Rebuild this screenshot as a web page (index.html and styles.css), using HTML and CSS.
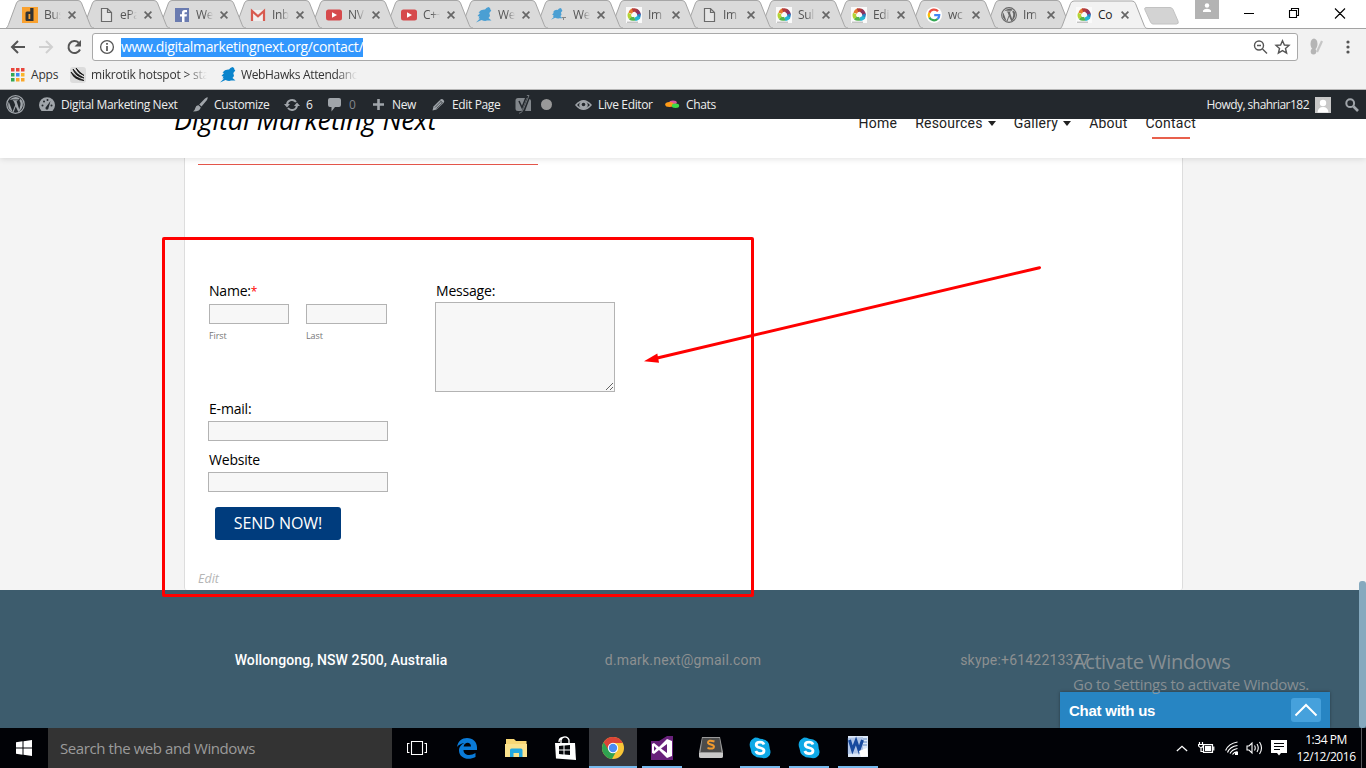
FILE: index.html
```html
<!DOCTYPE html>
<html lang="en">
<head>
<meta charset="utf-8">
<title>Contact - Digital Marketing Next</title>
<link rel="stylesheet" href="styles.css">
</head>
<body>
<svg class="defs" width="0" height="0">
  <symbol id="shape" viewBox="0 0 88 28"><path d="M0 28 C1.500 28 1.700 26 2.500 24.500 L10.500 3 Q11.500 .5 14 .5 H72 Q74.500 .5 75.500 3 L84 24.500 C84.800 26.500 85.500 28 88 28"/></symbol>
  <symbol id="x" viewBox="0 0 8 8"><path d="M.6.6 7.400 7.400M7.400.6.6 7.400" fill="none" stroke="#666" stroke-width="1.700"/></symbol>
  <symbol id="doc" viewBox="0 0 16 16"><path d="M1.500 1.500H7.500L11.500 5.500V14.500H1.500ZM7.500 1.500V5.500H11.500" fill="#e6e6e6" stroke="#6a6a6a" stroke-width="1.200"/></symbol>
  <symbol id="dd" viewBox="0 0 16 16"><rect width="16" height="16" fill="#f9a12f"/><path d="M8.200 1H11.500V14H4.500Q3.500 14 3.500 12.500V6Q3.500 4.500 5 4.500H8.200ZM6.500 7V12H8.300V7Z" fill="#333" fill-rule="evenodd"/></symbol>
  <symbol id="fb" viewBox="0 0 16 16"><rect x="1" y="1" width="14" height="14" fill="#6a7bb0"/><path d="M8 15V9.500H6V7.200H8V5.500Q8 3 10.500 3H13V5.200H11.300Q10.500 5.200 10.500 6V7.200H13L12.600 9.500H10.500V15Z" fill="#fff"/></symbol>
  <symbol id="gm" viewBox="0 0 16 16"><rect x="1" y="3" width="14" height="11" fill="#f1eeee"/><path d="M2 14V4L8 9.300 14 4V14" fill="none" stroke="#d85b50" stroke-width="2.200"/></symbol>
  <symbol id="yt" viewBox="0 0 16 16"><rect y="2.500" width="16" height="11" rx="2.500" fill="#d64a4c"/><path d="M6 5.200V10.800L11 8Z" fill="#fff"/></symbol>
  <symbol id="hawk" viewBox="0 0 16 16"><path d="M12.500 0Q10 .5 9 2.500 5 2 2.500 5.500L4 6 1.500 9 3.500 9.500 2.500 11.500H4L0 15.500 5.500 13Q9 14.500 11 13.500L15.500 13.500 12.500 11 14 9 13.300 6 15.300 3.500 14.500 2.800Q14.500.5 12.500 0Z"/></symbol>
  <symbol id="swirl" viewBox="0 0 16 16"><rect width="16" height="16" fill="#fafafa"/><g fill="none" stroke-width="3.600"><path d="M4.200 6.200A4.600 4.600 0 0 1 7.500 3" stroke="#e77a2e"/><path d="M6.500 3.300A4.600 4.600 0 0 1 11.500 4.500" stroke="#b23a3c"/><path d="M10.500 3.800A4.600 4.600 0 0 1 13 8" stroke="#8a3360"/><path d="M13 7A4.600 4.600 0 0 1 12 11" stroke="#2d7fc4"/><path d="M13 9.800A4.600 4.600 0 0 1 8.700 12" stroke="#25b7d3"/><path d="M8.800 11.500A4.600 4.600 0 0 1 4 10.800" stroke="#55b54b"/><path d="M4.300 11A4.600 4.600 0 0 1 3.700 6.500" stroke="#b4d334"/></g><path d="M1 15.200H12" stroke="#aaa"/></symbol>
  <symbol id="goog" viewBox="0 0 16 16"><circle cx="8" cy="8" r="8" fill="#fff"/><g fill="none" stroke-width="2.300"><path d="M12 4.300A5.200 5.200 0 0 0 3.300 5.800" stroke="#ea5044"/><path d="M3.300 5.800A5.200 5.200 0 0 0 3.400 10.500" stroke="#fbbc05"/><path d="M3.400 10.500A5.200 5.200 0 0 0 11.500 12" stroke="#34a853"/><path d="M11.500 12A5.200 5.200 0 0 0 13.200 8.200H8.200" stroke="#4285f4"/></g></symbol>
  <symbol id="wp" viewBox="0 0 18 18"><circle cx="9" cy="9" r="8.300" fill="none" stroke="currentColor" stroke-width="1.200"/><path d="M2.600 6.300 6.200 15.700 8.700 9.500 7.400 6 6.500 5.800V5H11V5.800L10 6 12.600 13.700 13.700 9.500Q14.200 7.500 13 6 12.300 4.500 13.800 3.800L15.500 5.600Q17.300 10 13.500 14.800L11.700 16 9.200 10.800 7.300 16.200Q3.500 15.200 2.200 11.500Q1.500 8.500 2.600 6.300ZM3.500 4.800Q6.500 1 11.500 2.300L13 3 12 4.200H6Z" fill="currentColor"/></symbol>
  <symbol id="chev" viewBox="0 0 14 8"><path d="M1 7 7 1.500 13 7" fill="none" stroke="currentColor" stroke-width="1.500"/></symbol>
  <symbol id="skype" viewBox="0 0 24 24"><path d="M7 1.500Q10 1.500 12 2.800Q22 3 21.700 12.500Q24 18 20 21 17 23 13.500 21.800Q3.500 22 2.500 12.500Q-.5 5 7 1.500Z" fill="#0ea9e6"/><path d="M16 8.500Q15 6.200 12 6.200 8.200 6.200 8.200 9C8.200 12.700 16 10.800 16 14.700Q16 17.600 12 17.600 8.800 17.600 7.800 15" fill="none" stroke="#fff" stroke-width="2.800"/></symbol>
</svg>

<div class="screen">
  <div class="tabstrip">
    <div class="tabs">
      <div class="tab z15"><svg class="shape"><use href="#shape"/></svg><svg class="fav"><use href="#dd"/></svg><span class="title">Bus</span><svg class="close"><use href="#x"/></svg></div>
      <div class="tab z14"><svg class="shape"><use href="#shape"/></svg><svg class="fav doc"><use href="#doc"/></svg><span class="title">ePa</span><svg class="close"><use href="#x"/></svg></div>
      <div class="tab z13"><svg class="shape"><use href="#shape"/></svg><svg class="fav"><use href="#fb"/></svg><span class="title">We</span><svg class="close"><use href="#x"/></svg></div>
      <div class="tab z12"><svg class="shape"><use href="#shape"/></svg><svg class="fav"><use href="#gm"/></svg><span class="title">Inb</span><svg class="close"><use href="#x"/></svg></div>
      <div class="tab z11"><svg class="shape"><use href="#shape"/></svg><svg class="fav"><use href="#yt"/></svg><span class="title">NV</span><svg class="close"><use href="#x"/></svg></div>
      <div class="tab z10"><svg class="shape"><use href="#shape"/></svg><svg class="fav"><use href="#yt"/></svg><span class="title">C++</span><svg class="close"><use href="#x"/></svg></div>
      <div class="tab z9"><svg class="shape"><use href="#shape"/></svg><svg class="fav hawk"><use href="#hawk"/></svg><span class="title">We</span><svg class="close"><use href="#x"/></svg></div>
      <div class="tab z8"><svg class="shape"><use href="#shape"/></svg><svg class="fav hawk"><use href="#hawk" width="12" height="14"/><path d="M11 10.500H15M12.500 10.500V13" stroke="#888"/></svg><span class="title">We</span><svg class="close"><use href="#x"/></svg></div>
      <div class="tab z7"><svg class="shape"><use href="#shape"/></svg><svg class="fav"><use href="#swirl"/></svg><span class="title">Im</span><svg class="close"><use href="#x"/></svg></div>
      <div class="tab z6"><svg class="shape"><use href="#shape"/></svg><svg class="fav doc"><use href="#doc"/></svg><span class="title">Im</span><svg class="close"><use href="#x"/></svg></div>
      <div class="tab z5"><svg class="shape"><use href="#shape"/></svg><svg class="fav"><use href="#swirl"/></svg><span class="title">Sul</span><svg class="close"><use href="#x"/></svg></div>
      <div class="tab z4"><svg class="shape"><use href="#shape"/></svg><svg class="fav"><use href="#swirl"/></svg><span class="title">Edi</span><svg class="close"><use href="#x"/></svg></div>
      <div class="tab z3"><svg class="shape"><use href="#shape"/></svg><svg class="fav"><use href="#goog"/></svg><span class="title">wc</span><svg class="close"><use href="#x"/></svg></div>
      <div class="tab z2"><svg class="shape"><use href="#shape"/></svg><svg class="fav wpfav"><use href="#wp"/></svg><span class="title">Im</span><svg class="close"><use href="#x"/></svg></div>
      <div class="tab active"><svg class="shape"><use href="#shape"/></svg><svg class="fav"><use href="#swirl"/></svg><span class="title">Co</span><svg class="close"><use href="#x"/></svg></div>
    </div>
    <svg class="newtab" viewBox="0 0 36 18"><path d="M2 .5H26Q28 .5 29 2.500L34 14Q35 17 32.500 17H9Q7.500 17 6.500 15L1 3Q0 .5 2 .5Z" fill="#d3d3d3" stroke="#c2c2c2"/></svg>
    <div class="profile"><svg width="10" height="10" viewBox="0 0 10 10"><circle cx="5" cy="2.500" r="2.200" fill="#fff"/><path d="M1 9V7.500Q2 5.800 5 5.800T9 7.500V9Z" fill="#fff"/></svg></div>
    <svg class="winbtns" viewBox="0 0 104 12" fill="none" stroke="#000" stroke-width="1.100"><path d="M0 6.500H10M45.500 3.500H52.500V10.500H45.500ZM47.500 3.500V1.500H54.500V8.500H52.500M91 1.500 101 11.500M101 1.500 91 11.500"/></svg>
  </div>

  <div class="toolbar">
    <svg class="navicons" viewBox="0 0 84 20" fill="none" stroke-width="2"><path d="M17 10H4M10 4 4 10 10 16" stroke="#555"/><path d="M32 10H45M39 4 45 10 39 16" transform="matrix(1 0 0 1 -1 0)" stroke="#d0d0d0"/><path d="M70.700 5.800A6 6 0 1 0 72 12.500" stroke="#555"/><path d="M73 3V9.500H66.500Z" fill="#555" stroke="none"/></svg>
    <div class="omnibox">
      <svg width="16" height="16" viewBox="0 0 16 16"><circle cx="8" cy="8" r="6.400" fill="none" stroke="#555" stroke-width="1.300"/><path d="M8 7V12M8 4V5.700" stroke="#555" stroke-width="1.700"/></svg>
      <span class="url">www.digitalmarketingnext.org/contact/</span>
      <svg class="omniright" viewBox="0 0 38 16" fill="none" stroke="#555" stroke-width="1.400"><circle cx="6" cy="6.500" r="4.500"/><path d="M9.500 10 14 14.500M4 6.500H8"/><path d="M29.500 1.700 31.400 6 36 6.400 32.500 9.500 33.600 14 29.500 11.600 25.400 14 26.500 9.500 23 6.400 27.600 6Z"/></svg>
    </div>
    <svg class="ext" viewBox="0 0 14 18"><ellipse cx="5" cy="6" rx="3.500" ry="5.500" fill="#b5b5b5"/><ellipse cx="4.500" cy="13.500" rx="2.800" ry="3" fill="#b5b5b5"/><path d="M8 14 13 3" stroke="#c6c6c6" stroke-width="2.200"/></svg>
    <svg class="kebab" viewBox="0 0 4 16" fill="#555"><circle cx="2" cy="3" r="1.600"/><circle cx="2" cy="8" r="1.600"/><circle cx="2" cy="13" r="1.600"/></svg>
  </div>

  <div class="bookmarks">
    <div class="bm bm-apps"><svg width="14" height="14" viewBox="0 0 14 14"><path d="M0 0h3.500v3.500H0zM5 0h3.500v3.500H5zM10 0h3.500v3.500H10z" fill="#e8453c"/><path d="M0 5h3.500v3.500H0z" fill="#34a853"/><path d="M5 5h3.500v3.500H5z" fill="#3b8af0"/><path d="M10 5h3.500v3.500H10z" fill="#f9b52b"/><path d="M0 10h3.500v3.500H0z" fill="#34a853"/><path d="M5 10h3.500v3.500H5zM10 10h3.500v3.500H10z" fill="#f9a72b"/></svg><span>Apps</span></div>
    <div class="bm bm-mik"><svg width="16" height="16" viewBox="0 0 16 16"><rect width="16" height="16" rx="3" fill="#dcdcdc"/><path d="M1 5Q4 13 14 13.500 6 11 1 5M3 2Q5 9.500 14 11 7 8 3 2M6 1Q8 6.500 14 8.500 9 5 6 1" stroke="#111" stroke-width=".8" fill="#111"/></svg><span class="fade">mikrotik hotspot &gt; sta</span></div>
    <div class="bm bm-hawk"><svg width="16" height="16" viewBox="0 0 16 16" fill="#0a84cc"><use href="#hawk"/></svg><span class="fade">WebHawks Attendanc</span></div>
  </div>

  <div class="adminbar">
    <div class="ab"><svg width="19" height="19"><use href="#wp"/></svg></div>
    <div class="ab"><svg width="16" height="15" viewBox="0 0 16 15"><path d="M2.500 14A8 8 0 1 1 13.500 14Z" fill="currentColor"/><g fill="#23282d"><circle cx="3.500" cy="8.500" r="1"/><circle cx="5" cy="4.500" r="1"/><circle cx="8.500" cy="3" r="1"/><circle cx="12.500" cy="8.500" r="1"/><path d="M11.500 4 9.500 11A1.500 1.500 0 1 1 7 10Z"/></g></svg><span>Digital Marketing Next</span></div>
    <div class="ab"><svg width="15" height="15" viewBox="0 0 15 15" fill="currentColor"><path d="M14.500 0Q15 1 14 3L8.500 9.500 6.200 7.500 12 1.500ZM5.500 8.300 7.700 10.300Q7.500 14.500 0 14.500 2 13 2.300 11 3 8 5.500 8.300Z"/></svg><span>Customize</span></div>
    <div class="ab"><svg width="16" height="14" viewBox="0 0 16 14" fill="currentColor"><path d="M3 6.500A5 5 0 0 1 12 4M13 7.500A5 5 0 0 1 4 10" fill="none" stroke="currentColor" stroke-width="2"/><path d="M0 6H6L3 9.500ZM10 8H16L13 4.500Z"/></svg><span>6</span></div>
    <div class="ab"><svg width="13" height="15" viewBox="0 0 13 15"><path d="M2 1H11Q13 1 13 3V8Q13 10 11 10H7L3.500 14.500V10H2Q0 10 0 8V3Q0 1 2 1Z" fill="currentColor"/></svg><span class="dim">0</span></div>
    <div class="ab"><svg width="13" height="13" viewBox="0 0 13 13"><path d="M6.500 1V12M1 6.500H12" stroke="currentColor" stroke-width="2.600"/></svg><span class="push">New</span></div>
    <div class="ab"><svg width="14" height="14" viewBox="0 0 14 14"><path d="M1.500 12.500 2.500 8.500 9.500 1.500Q11 .5 12.500 2T12.500 5L5.500 11.500Z" fill="currentColor"/><path d="M4 9.500 10 3.500M5.500 10.500 11.300 5M9 2.500 11.800 5.300" stroke="#23282d" stroke-width=".7"/></svg><span class="push">Edit Page</span></div>
    <div class="ab"><svg width="17" height="19" viewBox="0 0 17 19"><path d="M3 3H12L8 16H3Q.5 16 .5 13.500V5.500Q.5 3 3 3ZM14.500 4Q16 4.500 16 6V16H10Z" fill="#82878c"/><path d="M4 6 7 12.500 11.800.5H14L8.500 14Q7 18 4 18" fill="none" stroke="#23282d" stroke-width="1.500"/><path d="M11.800.5H14L8.500 14Q7 18.300 4 18.300" fill="none" stroke="#82878c" stroke-width=".8"/></svg></div>
    <div class="ab"><i class="dot"></i></div>
    <div class="ab"><svg width="17" height="12" viewBox="0 0 17 12"><path d="M1 6Q8.500-2.500 16 6Q8.500 14.500 1 6Z" fill="none" stroke="#a0a5aa" stroke-width="1.500"/><circle cx="8.500" cy="6" r="4.300" fill="#a0a5aa"/><circle cx="8.500" cy="5.500" r="1.800" fill="#23282d"/></svg><span>Live Editor</span></div>
    <div class="ab"><svg width="15" height="9" viewBox="0 0 15 9"><ellipse cx="8" cy="2.500" rx="3.800" ry="2" fill="#e055a0"/><ellipse cx="4.500" cy="4.500" rx="4.300" ry="2.500" fill="#ff9b17"/><ellipse cx="10.500" cy="5.800" rx="3.700" ry="2.200" fill="#3edc48"/></svg><span>Chats</span></div>
    <div class="ab howdy"><span>Howdy, shahriar182</span><svg width="16" height="16" viewBox="0 0 16 16"><rect width="16" height="16" fill="#c8c8c8"/><circle cx="8" cy="6" r="3.200" fill="#fff"/><path d="M2.500 15.500Q3 10 8 10T13.500 15.500Z" fill="#fff"/></svg><svg class="find" width="14" height="14" viewBox="0 0 14 14" fill="none" stroke="#a0a5aa"><circle cx="5.200" cy="5.200" r="3.900" stroke-width="2"/><path d="M8.500 8.500 13 13" stroke-width="2.600"/></svg></div>
  </div>

  <header class="site-header">
    <div class="logo">Digital Marketing Next</div>
    <nav class="menu"><a>Home</a><a>Resources<i class="caret"></i></a><a>Gallery<i class="caret"></i></a><a>About</a><a class="current">Contact</a></nav>
  </header>

  <main class="page">
    <section class="sheet">
      <div class="rule"></div>
      <form class="contact">
        <div class="left">
          <label>Name:<b class="req">*</b></label>
          <div class="names"><div><input class="field first"><small>First</small></div><div><input class="field last"><small>Last</small></div></div>
          <label>E-mail:</label>
          <input class="field wide">
          <label class="lb-web">Website</label>
          <input class="field wide">
          <button class="send" type="button">SEND NOW!</button>
        </div>
        <div class="right">
          <label>Message:</label>
          <textarea class="field area"></textarea>
        </div>
      </form>
      <a class="editlink">Edit</a>
    </section>
  </main>

  <footer class="site-footer">
    <div class="fcol addr"><span>Wollongong, NSW 2500, Australia</span></div>
    <div class="fcol"><span>d.mark.next@gmail.com</span></div>
    <div class="fcol"><span>skype:+6142213377</span></div>
  </footer>

  <div class="taskbar">
    <div class="start"><svg width="16" height="16" viewBox="0 0 16 16" fill="#fff"><path d="M0 2.300 6.500 1.300V7.500H0ZM7.500 1.200 16 0V7.500H7.500ZM0 8.500H6.500V14.700L0 13.700ZM7.500 8.500H16V16L7.500 14.800Z"/></svg></div>
    <div class="search"><span>Search the web and Windows</span></div>
    <div class="task"><svg width="20" height="14" viewBox="0 0 20 14" fill="none" stroke="#fff" stroke-width="1.100"><path d="M4.500.5H15.500V13.500H4.500ZM2.500 2.500H.5V11.500H2.500M17.500 2.500H19.500V11.500H17.500"/></svg></div>
    <div class="task edge"><svg width="22" height="22" viewBox="0 0 22 22"><path d="M1 10C2 4 6 1 11 1 17 1 21 5 21 10.500V13H7.500C7.500 19 15 19 19.500 16V20C12 24 3 21 3 13.500 3 9.500 6 7 8.500 6 5 6.500 2.500 8 1 10ZM7.600 9.500H15C15 4.500 8.500 4.500 7.600 9.500Z" fill="#0a7bd8" fill-rule="evenodd"/></svg></div>
    <div class="task"><svg width="22" height="19" viewBox="0 0 22 19"><path d="M1 0H9L11 2H21.500V18H1Z" fill="#f8d775"/><path d="M0 5H22V18H0Z" fill="#fbe38e"/><path d="M5 18V11Q5 9.500 6.500 9.500H16Q17.500 9.500 17.500 11V18H14V14H8.500V18Z" fill="#23a8e0"/></svg></div>
    <div class="task"><svg width="22" height="24" viewBox="0 0 22 24"><path d="M7 7V4Q8 .8 11 .8T15 4V7M5 6Q5 2 9 1.500" fill="none" stroke="#fff" stroke-width="1.300"/><path d="M1 7H21L22 24 2 22.500Z" fill="#fff"/><path d="M5 10 9.500 9.500V13.500H5ZM10.500 9.500 16 9V13.500H10.500ZM5 14.500H9.500V18.500L5 18ZM10.500 14.500H16V19L10.500 18.600Z" fill="#05060a"/></svg></div>
    <div class="task chrome"><svg width="22" height="22" viewBox="0 0 22 22"><circle cx="11" cy="11" r="11" fill="#f8c537"/><path d="M11 11 1.500 5.500A11 11 0 0 0 10 22L15 13Z" fill="#2fa250"/><path d="M11 6H20.800A11 11 0 0 0 1.700 5.200L6.500 13Z" fill="#db4437"/><circle cx="11" cy="11" r="5.200" fill="#fff"/><circle cx="11" cy="11" r="4.200" fill="#4a8cf5"/></svg></div>
    <div class="task run"><svg width="22" height="24" viewBox="0 0 22 24"><path d="M0 5H8L16 0H22V24H0Z" fill="#68217a"/><path d="M1 8 3 7 8 11 16 3 21 5V20L16 22 8 14 3 18 1 17ZM3 10V15L5.500 12.500ZM10 12.500 16 17V8Z" fill="#fff" fill-rule="evenodd"/></svg></div>
    <div class="task"><svg width="24" height="22" viewBox="0 0 24 22"><path d="M3 0H21L24 15V19Q24 21 22 21H2Q0 21 0 19V15Z" fill="#9a9a9a"/><path d="M3.500 1H20.500L22.500 15H1.500Z" fill="#4b4b4b"/><path d="M0 16H24V19Q24 21 22 21H2Q0 21 0 19Z" fill="#c9c9c9"/><path d="M15.500 4.500Q9 2.500 9 5.500C9 8 15 7 15 9.800Q15 12.500 8.500 11" fill="none" stroke="#f19a2e" stroke-width="2"/></svg></div>
    <div class="task run"><svg width="24" height="24"><use href="#skype"/></svg></div>
    <div class="task run"><svg width="24" height="24"><use href="#skype"/></svg></div>
    <div class="task run word"><svg width="22" height="22" viewBox="0 0 22 22"><rect x="1" width="20" height="21" fill="#dbe7f7"/><path d="M16 3H20M16 6H20M16 9H20" stroke="#5d86c4"/><path d="M0 2 16 1V17L0 18Z" fill="#2a5db5" opacity=".25"/><path d="M2.500 4 5.500 14 9 5 12 14 15.500 4" fill="none" stroke="#174a9e" stroke-width="3"/><path d="M12 15 20 12 21 20 14 21Z" fill="#fff"/></svg></div>
    <div class="tray">
      <svg class="t-chev" viewBox="0 0 14 8"><use href="#chev"/></svg>
      <svg class="t-bat" viewBox="0 0 17 12" fill="none" stroke="#fff" stroke-width="1.200"><path d="M5.500 2.600H14.500V10.400H5.500ZM15.800 4.500V8.500M1.500 0V2M4.500 0V2M.6 2.500H5.200V4Q4.500 5.500 3 5.500T.6 4ZM3 5.500V9.500H5"/><path d="M7 4H13.200V9H7Z" fill="#fff" stroke="none"/></svg>
      <svg class="t-wifi" viewBox="0 0 14 14" fill="none" stroke="#fff"><path d="M.6 9.500Q3.500 2.500 12.500 1M2.500 11.500Q5 5.500 12.500 4.500M5 12.500Q7 8.500 12.500 7.500M7.500 13.500Q9 11 12.500 10.500" stroke-width="1.200"/><rect x="10" y="11" width="3" height="3" fill="#fff" stroke="none"/></svg>
      <svg class="t-vol" viewBox="0 0 17 14" fill="none" stroke="#fff" stroke-width="1.100"><path d="M1 5H3L6 2V12L3 9H1ZM8.500 4.500Q10 7 8.500 9.500M11 3Q13.500 7 11 11M13.500 1Q17.500 7 13.500 13"/></svg>
      <svg class="t-note" viewBox="0 0 16 16"><path d="M0 0H16V13H10L8 15.500 6 13H0Z" fill="#fff"/><path d="M3 3.500H13M3 6.500H13M3 9.500H9" stroke="#010206" stroke-width="1.100"/></svg>
      <div class="clock"><span class="time">1:34 PM</span><span class="date">12/12/2016</span></div>
      <i class="peek"></i>
    </div>
  </div>

  <div class="scrollthumb"></div>
  <div class="chat"><span>Chat with us</span><div class="chatbtn"><svg width="24" height="14" viewBox="0 0 24 14"><path d="M1.500 12.500 12 2 22.500 12.500" fill="none" stroke="#fff" stroke-width="2"/></svg></div></div>
  <div class="watermark"><div class="wm1">Activate Windows</div><div class="wm2">Go to Settings to activate Windows.</div></div>
  <div class="highlight"></div>
  <svg class="arrow" viewBox="0 0 404 100"><path d="M399.500 5.700 13 97" stroke="#f00" stroke-width="3" stroke-linecap="round"/><path d="M4 99.300 17.300 91.500 19 100.700Z" fill="#f00"/></svg>
</div>
</body>
</html>
```
FILE: styles.css
```css
* { box-sizing: border-box; }
body { margin: 0; font: 12px/1 "Open Sans", "Noto Sans", sans-serif; color: #000; }
svg { display: block; flex: none; }
.defs { position: absolute; }
.screen { position: relative; width: 1366px; height: 768px; overflow: hidden; display: flex; flex-direction: column; background: #f4f4f4; }

/* browser tabs */
.tabstrip { height: 29px; flex: none; background: #fff; display: flex; align-items: flex-start; padding-left: 6px; border-bottom: 1px solid #a3a3a3; }
.tabs { display: flex; flex: none; }
.tab { position: relative; width: 75px; height: 29px; flex: none; display: flex; align-items: center; padding: 1px 0 0 16px; }
.tab:nth-child(-n+4) { width: 76px; }
.shape { position: absolute; left: 0; top: 0; width: 88px; height: 28px; fill: #dadada; stroke: #a6a6a6; stroke-width: 1; }
.fav { position: relative; width: 16px; height: 16px; }
.doc { padding-left: 2px; width: 18px; margin-right: -2px; }
.hawk { fill: #4a9fd3; }
.wpfav { color: #666; }
.title { position: relative; width: 17px; margin-left: 6px; overflow: hidden; white-space: nowrap; font-size: 12px; line-height: 16px; letter-spacing: -.3px; color: #555; -webkit-mask-image: linear-gradient(90deg, #000 50%, transparent); mask-image: linear-gradient(90deg, #000 50%, transparent); }
.close { position: relative; width: 8px; height: 8px; margin-left: 7px; }
.z15 { z-index: 15; } .z14 { z-index: 14; } .z13 { z-index: 13; } .z12 { z-index: 12; } .z11 { z-index: 11; }
.z10 { z-index: 10; } .z9 { z-index: 9; } .z8 { z-index: 8; } .z7 { z-index: 7; } .z6 { z-index: 6; }
.z5 { z-index: 5; } .z4 { z-index: 4; } .z3 { z-index: 3; } .z2 { z-index: 2; }
.active { z-index: 20; }
.active .shape { fill: #f2f2f2; height: 29px; }
.active .title { color: #222; width: 18px; -webkit-mask-image: none; mask-image: none; }
.active .close { margin-left: 5px; }
.newtab { width: 36px; height: 18px; margin: 7px 0 0 9px; }
.profile { width: 24px; height: 19px; margin-left: 15px; background: #b3b3b3; display: flex; justify-content: center; padding-top: 3px; }
.winbtns { width: 104px; height: 12px; margin: 7px 0 0 25px; }

/* toolbar */
.toolbar { height: 36px; flex: none; background: #f2f2f2; display: flex; align-items: center; padding: 0 0 0 8px; }
.navicons { width: 84px; height: 20px; }
.omnibox { width: 1206px; height: 28px; background: #fff; border: 1px solid #a9a9a9; border-radius: 3px; display: flex; align-items: center; padding: 0 6px 0 6px; }
.url { margin-left: 6px; height: 19px; line-height: 18px; font-size: 14px; letter-spacing: -.34px; color: #fff; background: #3297fd; white-space: nowrap; }
.omniright { width: 38px; height: 16px; margin-left: auto; }
.ext { width: 14px; height: 18px; margin-left: 11px; }
.kebab { width: 4px; height: 16px; margin-left: 23px; }
.bookmarks { height: 25px; flex: none; background: #f2f2f2; border-bottom: 1px solid #b6b6b6; display: flex; padding: 0 0 4px 11px; }
.bm { display: flex; align-items: center; gap: 6px; white-space: nowrap; color: #333; letter-spacing: -.2px; line-height: 18px; }
.bm-apps { width: 59px; }
.bm-mik { width: 150px; gap: 5px; }
.bm-hawk { gap: 5px; letter-spacing: -.35px; }
.fade { width: 116px; overflow: hidden; -webkit-mask-image: linear-gradient(90deg, #000 82%, transparent); mask-image: linear-gradient(90deg, #000 82%, transparent); }

/* WordPress admin bar */
.adminbar { position: relative; z-index: 3; height: 29px; flex: none; background: #23282d; color: #a0a5aa; display: grid; padding-left: 6px; grid-template-columns: 33px 154px 91px 44px 44px 59px 84px 26px 34px 90px 100px 1fr; }
.ab { display: flex; align-items: center; gap: 6px; white-space: nowrap; }
.ab span { color: #eee; font-size: 12px; line-height: 18px; letter-spacing: -.36px; }
.ab .dim { color: #82878c; margin-left: 2px; }
.ab .push { margin-left: 1px; }
.dot { width: 11px; height: 11px; border-radius: 50%; background: #999; }
.ab.howdy { justify-content: flex-end; padding-right: 7px; }
.ab.howdy span { letter-spacing: -.53px; }
.find { margin-left: 8px; }

/* site header */
.site-header { position: relative; z-index: 2; height: 39px; flex: none; background: #fff; box-shadow: 0 1px 6px rgba(0,0,0,.12); display: flex; justify-content: space-between; padding: 0 170px 0 174px; }
.logo { margin-top: -19px; font-style: italic; font-size: 27px; line-height: 40px; letter-spacing: -.15px; white-space: nowrap; }
.menu { display: flex; font: 14px/20px Roboto, sans-serif; letter-spacing: .22px; color: #222; margin-top: -6px; }
.menu a { margin-left: 18px; white-space: nowrap; height: 20px; display: flex; align-items: center; }
.caret { border: 4.500px solid transparent; border-top: 5px solid #222; border-bottom: 0; margin-left: 5px; }
.current { position: relative; }
.current::after { content: ""; position: absolute; left: 6px; width: 38px; top: 24px; height: 2px; background: #e8604c; }

/* page content */
.page { height: 432px; flex: none; padding-left: 184px; }
.sheet { width: 999px; height: 432px; background: #fff; border: 1px solid #ddd; border-width: 0 1px; border-radius: 0 0 3px 3px; padding: 6px 0 0 13px; }
.rule { width: 340px; height: 1px; background: #e4564b; }
.contact { display: flex; margin: 116px 0 0 10px; height: 261px; }
.left { width: 227px; }
.contact label { display: block; height: 20px; padding-left: 1px; font-size: 14px; line-height: 20px; letter-spacing: -.2px; }
.req { color: #f00; font-weight: 400; font-size: 12px; }
.field { display: block; margin: 0; border: 1px solid #b3b3b3; background: #f7f7f7; border-radius: 0; }
.names { display: flex; gap: 17px; height: 97px; padding: 3px 0 0 1px; }
.names .field { width: 81px; height: 20px; }
.names .first { width: 80px; }
.names small { display: block; font-size: 9px; line-height: 12px; letter-spacing: -.1px; margin-top: 6px; color: #777; }
.names + label { margin-top: 1px; }
.wide { width: 180px; height: 20px; margin-top: 2px; }
.contact .lb-web { margin-top: 9px; }
.area { width: 180px; height: 90px; margin-top: 1px; resize: both; }
.send { display: block; width: 126px; height: 33px; margin: 15px 0 0 7px; padding: 0; border: 0; border-radius: 3px; background: #003c7d; color: #fff; font: 16px/33px "Open Sans", sans-serif; letter-spacing: -.05px; }
.editlink { display: block; font: italic 12.500px/16px "Open Sans", sans-serif; color: #b5b5b5; margin-top: 29px; }

/* footer */
.site-footer { height: 138px; flex: none; background: #3d5c6d; display: grid; grid-template-columns: repeat(3, 342px); padding: 60px 170px 0; font: 14px/20px Roboto, sans-serif; color: #8d9091; text-align: center; letter-spacing: .2px; }
.addr { color: #fff; font-weight: 500; letter-spacing: .1px; }

/* taskbar */
.taskbar { height: 40px; flex: none; background: #010206; display: flex; color: #fff; }
.start { width: 48px; display: flex; align-items: center; justify-content: center; }
.search { width: 344px; background: #333; color: #9b9b9b; padding-left: 12px; font-size: 15px; line-height: 40px; letter-spacing: -.42px; }
.task { width: 49px; height: 40px; display: flex; align-items: center; justify-content: center; }
.edge { margin-left: 1px; }
.chrome { background: #37393e; border-bottom: 2px solid #76b9ed; width: 48px; padding-top: 2px; }
.run { background: linear-gradient(#76b9ed, #76b9ed) center bottom / 40px 2px no-repeat; }
.word { padding-bottom: 3px; }
.tray { margin-left: auto; display: flex; align-items: center; }
.t-chev { width: 12px; height: 7px; margin-right: 10px; }
.t-bat { width: 17px; height: 12px; margin-right: 10px; }
.t-wifi { width: 14px; height: 14px; margin-right: 7px; }
.t-vol { width: 17px; height: 14px; margin-right: 8px; }
.t-note { width: 16px; height: 16px; margin-right: 6px; }
.clock { display: flex; flex-direction: column; align-items: center; width: 63px; padding-left: 3px; line-height: 17px; letter-spacing: -.45px; white-space: nowrap; }
.peek { width: 1px; height: 40px; margin: 0 4px 0 5px; background: #55575b; }

/* overlays */
.scrollthumb { position: absolute; left: 1359px; top: 581px; width: 7px; height: 147px; border-radius: 3px; background: #85a9be; z-index: 4; }
.chat { position: absolute; left: 1060px; top: 692px; width: 270px; height: 36px; background: #2785c3; box-shadow: 0 0 3px rgba(0,0,0,.35); clip-path: inset(-4px -4px 0 -4px); display: flex; align-items: center; justify-content: space-between; padding: 0 9px; color: #fff; font: bold 15px "Liberation Sans", sans-serif; letter-spacing: -.25px; }
.chatbtn { width: 30px; height: 24px; border-radius: 3px; background: #46a1dc; display: flex; align-items: center; justify-content: center; }
.watermark { position: absolute; left: 1073px; top: 649px; color: rgba(160,160,160,.75); white-space: nowrap; }
.wm1 { font-size: 20px; line-height: 26px; letter-spacing: -.42px; }
.wm2 { font-size: 15px; line-height: 20px; letter-spacing: -.28px; margin-top: -1px; }
.highlight { position: absolute; left: 162px; top: 237px; width: 592px; height: 360px; border: 3px solid #f00; border-radius: 2px; z-index: 5; }
.arrow { position: absolute; left: 640px; top: 262px; width: 404px; height: 100px; overflow: visible; z-index: 6; }
```
